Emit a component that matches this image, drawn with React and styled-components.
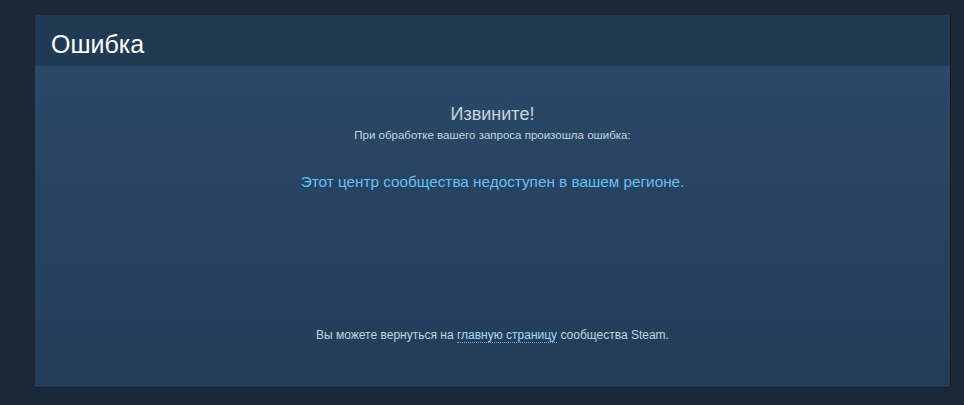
import React from 'react';
import styled, { createGlobalStyle } from 'styled-components';

const GlobalStyle = createGlobalStyle`
  html, body {
    margin: 0;
    padding: 0;
    background: #1b2838;
    font-family: Arial, "Liberation Sans", Helvetica, sans-serif;
  }
`;

const Page = styled.div`
  width: 964px;
  height: 405px;
  box-sizing: border-box;
  padding: 15px 14px 18px 35px;
  background: #1b2838;
`;

const Panel = styled.div`
  width: 915px;
  height: 372px;
  display: flex;
  flex-direction: column;
  box-shadow: 1px 0 0 rgba(0, 0, 0, 0.25), 0 1px 0 rgba(0, 0, 0, 0.25);
`;

const Header = styled.div`
  height: 51px;
  box-sizing: border-box;
  padding: 14px 16px 0;
  background: #213a54;
  color: #ffffff;
  font-size: 25px;
  line-height: 30px;
  font-weight: normal;
`;

const Body = styled.div`
  flex: 1;
  display: flex;
  flex-direction: column;
  align-items: center;
  padding-top: 37px;
  background: linear-gradient(to bottom, #2a4868 0%, #233c58 100%);
  color: #c6d4df;
  text-align: center;
`;

const Title = styled.h2`
  margin: 0;
  font-size: 18px;
  font-weight: normal;
  color: #c6d4df;
  line-height: 22px;
`;

const Sub = styled.div`
  margin-top: 3px;
  font-size: 11.5px;
  line-height: 15px;
  color: #c6d4df;
`;

const Message = styled.div`
  margin-top: 29px;
  font-size: 15.3px;
  line-height: 20px;
  color: #66c0f4;
`;

const Footer = styled.div`
  margin-top: auto;
  margin-bottom: 44px;
  font-size: 12px;
  line-height: 15px;
  color: #c6d4df;
`;

const Link = styled.a`
  color: #a8dcf8;
  text-decoration: none;
  border-bottom: 1px dotted #6ba8cf;
`;

export default function App() {
  return (
    <>
      <GlobalStyle />
      <Page>
        <Panel>
          <Header>Ошибка</Header>
          <Body>
            <Title>Извините!</Title>
            <Sub>При обработке вашего запроса произошла ошибка:</Sub>
            <Message>Этот центр сообщества недоступен в вашем регионе.</Message>
            <Footer>
              Вы можете вернуться на <Link href="#">главную страницу</Link> сообщества Steam.
            </Footer>
          </Body>
        </Panel>
      </Page>
    </>
  );
}
